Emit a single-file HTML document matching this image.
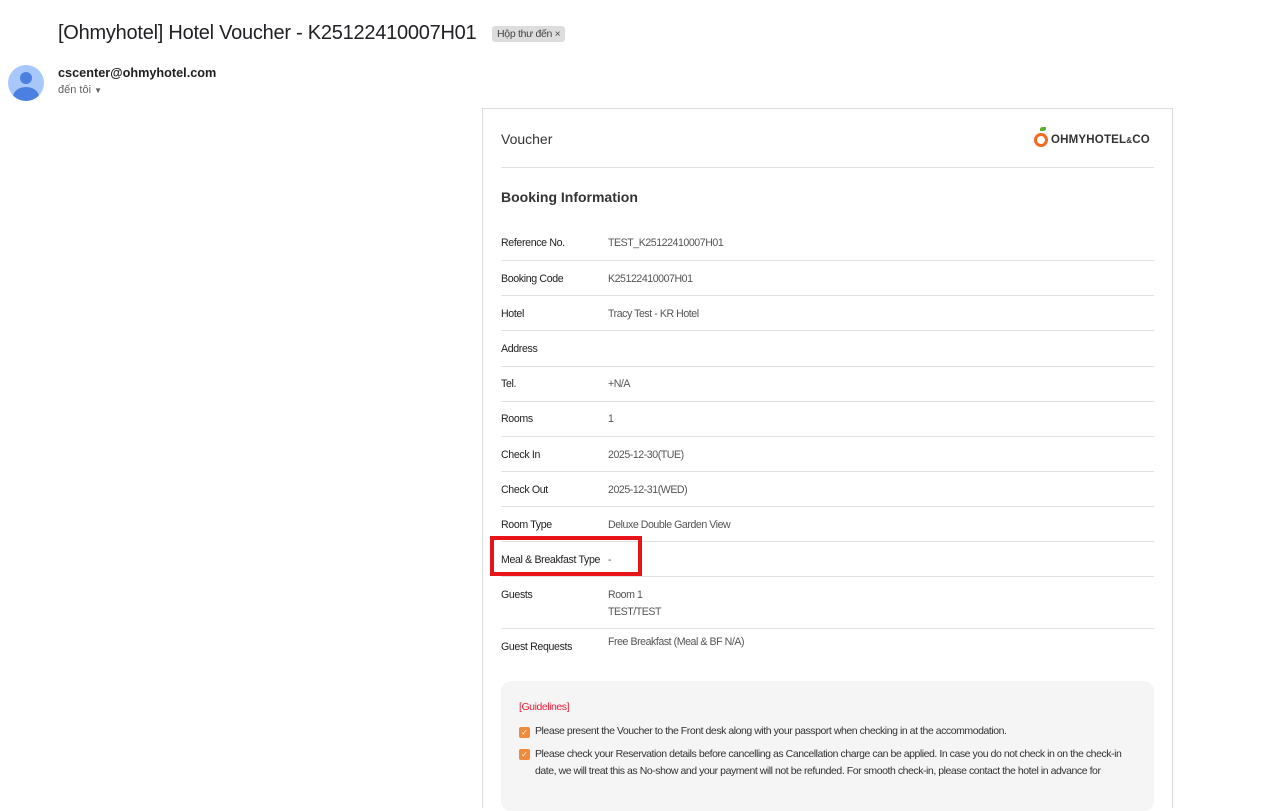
<!DOCTYPE html>
<html><head><meta charset="utf-8"><style>
*{margin:0;padding:0;box-sizing:border-box}
body{width:1287px;height:772px;overflow:hidden;background:#fff;font-family:"Liberation Sans",sans-serif;position:relative;color:#222}
.a{position:absolute;white-space:nowrap}
.card{position:absolute;left:482px;top:108px;width:691px;height:700px;border:1px solid #ddd;border-bottom:none}
.l{position:absolute;left:18px;font-size:10.6px;letter-spacing:-0.35px;color:#222}
.v{position:absolute;left:125px;font-size:10.6px;letter-spacing:-0.45px;color:#555;line-height:17px}
.hr{position:absolute;left:18px;width:653px;height:1px;background:#e2e2e2}
.g{font-size:10.5px;color:#333;letter-spacing:-0.45px}
</style></head><body>
<div class="a" style="left:58px;top:22px;font-size:20px;letter-spacing:-0.25px;color:#202124">[Ohmyhotel] Hotel Voucher - K25122410007H01</div>
<div class="a" style="left:492px;top:26px;height:16px;padding:0 5px;background:#ddd;border-radius:3px;font-size:10.5px;line-height:16px;color:#444;letter-spacing:-0.3px">Hộp thư đến <span style="font-size:10px">×</span></div>
<div class="a" style="left:8px;top:65px;width:36px;height:36px;border-radius:50%;background:#a8c7fa;overflow:hidden">
<div style="position:absolute;left:12px;top:7px;width:12px;height:12px;border-radius:50%;background:#4b7fe0"></div>
<div style="position:absolute;left:5px;top:22px;width:26px;height:20px;border-radius:50%;background:#4b7fe0"></div></div>
<div class="a" style="left:58px;top:66px;font-size:12.7px;font-weight:bold;color:#1f1f1f">cscenter@ohmyhotel.com</div>
<div class="a" style="left:58px;top:84px;font-size:11px;color:#5f6368">đến tôi <span style="font-size:8px">▼</span></div>
<div class="card">
<div class="a" style="left:18px;top:22px;font-size:14px;color:#333">Voucher</div>
<div class="a" style="left:550px;top:18px;width:18px;height:24px">
<div style="position:absolute;left:1px;top:6px;width:14px;height:14px;border:3px solid #f26b21;border-radius:50%"></div>
<div style="position:absolute;left:7px;top:0;width:6px;height:4px;background:#5bb031;border-radius:50% 0"></div></div>
<div class="a" style="left:568px;top:25px;font-size:11.5px;font-weight:bold;color:#333;letter-spacing:0.2px">OHMYHOTEL<span style="font-size:8px">&amp;</span>CO</div>
<div class="hr" style="top:58px"></div>
<div class="a" style="left:18px;top:80px;font-size:14px;font-weight:bold;color:#333">Booking Information</div>
<div class="l" style="top:128px">Reference No.</div><div class="v" style="top:126px">TEST_K25122410007H01</div>
<div class="hr" style="top:151px"></div>
<div class="l" style="top:164px">Booking Code</div><div class="v" style="top:162px">K25122410007H01</div>
<div class="hr" style="top:186px"></div>
<div class="l" style="top:199px">Hotel</div><div class="v" style="top:197px">Tracy Test - KR Hotel</div>
<div class="hr" style="top:221px"></div>
<div class="l" style="top:234px">Address</div>
<div class="hr" style="top:257px"></div>
<div class="l" style="top:269px">Tel.</div><div class="v" style="top:267px">+N/A</div>
<div class="hr" style="top:292px"></div>
<div class="l" style="top:304px">Rooms</div><div class="v" style="top:302px">1</div>
<div class="hr" style="top:327px"></div>
<div class="l" style="top:340px">Check In</div><div class="v" style="top:338px">2025-12-30(TUE)</div>
<div class="hr" style="top:362px"></div>
<div class="l" style="top:375px">Check Out</div><div class="v" style="top:373px">2025-12-31(WED)</div>
<div class="hr" style="top:397px"></div>
<div class="l" style="top:410px">Room Type</div><div class="v" style="top:408px">Deluxe Double Garden View</div>
<div class="hr" style="top:432px"></div>
<div class="l" style="top:445px">Meal &amp; Breakfast Type</div><div class="v" style="top:443px">-</div>
<div class="hr" style="top:467px"></div>
<div class="l" style="top:480px">Guests</div><div class="v" style="top:478px">Room 1<br>TEST/TEST</div>
<div class="hr" style="top:519px"></div>
<div class="l" style="top:532px">Guest Requests</div><div class="v" style="top:525px">Free Breakfast (Meal &amp; BF N/A)</div>
<div class="a" style="left:18px;top:572px;width:653px;height:130px;background:#f5f5f5;border-radius:10px">
<div class="a g" style="left:18px;top:20px;color:#e8203a">[Guidelines]</div>
<div class="a" style="left:18px;top:46px;width:11px;height:11px;background:#f08a3c;border-radius:2px;color:#fff;font-size:8px;line-height:11px;text-align:center">✓</div>
<div class="a g" style="left:34px;top:44px">Please present the Voucher to the Front desk along with your passport when checking in at the accommodation.</div>
<div class="a" style="left:18px;top:68px;width:11px;height:11px;background:#f08a3c;border-radius:2px;color:#fff;font-size:8px;line-height:11px;text-align:center">✓</div>
<div class="a g" style="left:34px;top:65px;line-height:17px">Please check your Reservation details before cancelling as Cancellation charge can be applied. In case you do not check in on the check-in<br>date, we will treat this as No-show and your payment will not be refunded. For smooth check-in, please contact the hotel in advance for</div>
</div>
</div>
<div class="a" style="left:490px;top:536px;width:152px;height:40px;border:4px solid #e8141b"></div>
</body></html>
